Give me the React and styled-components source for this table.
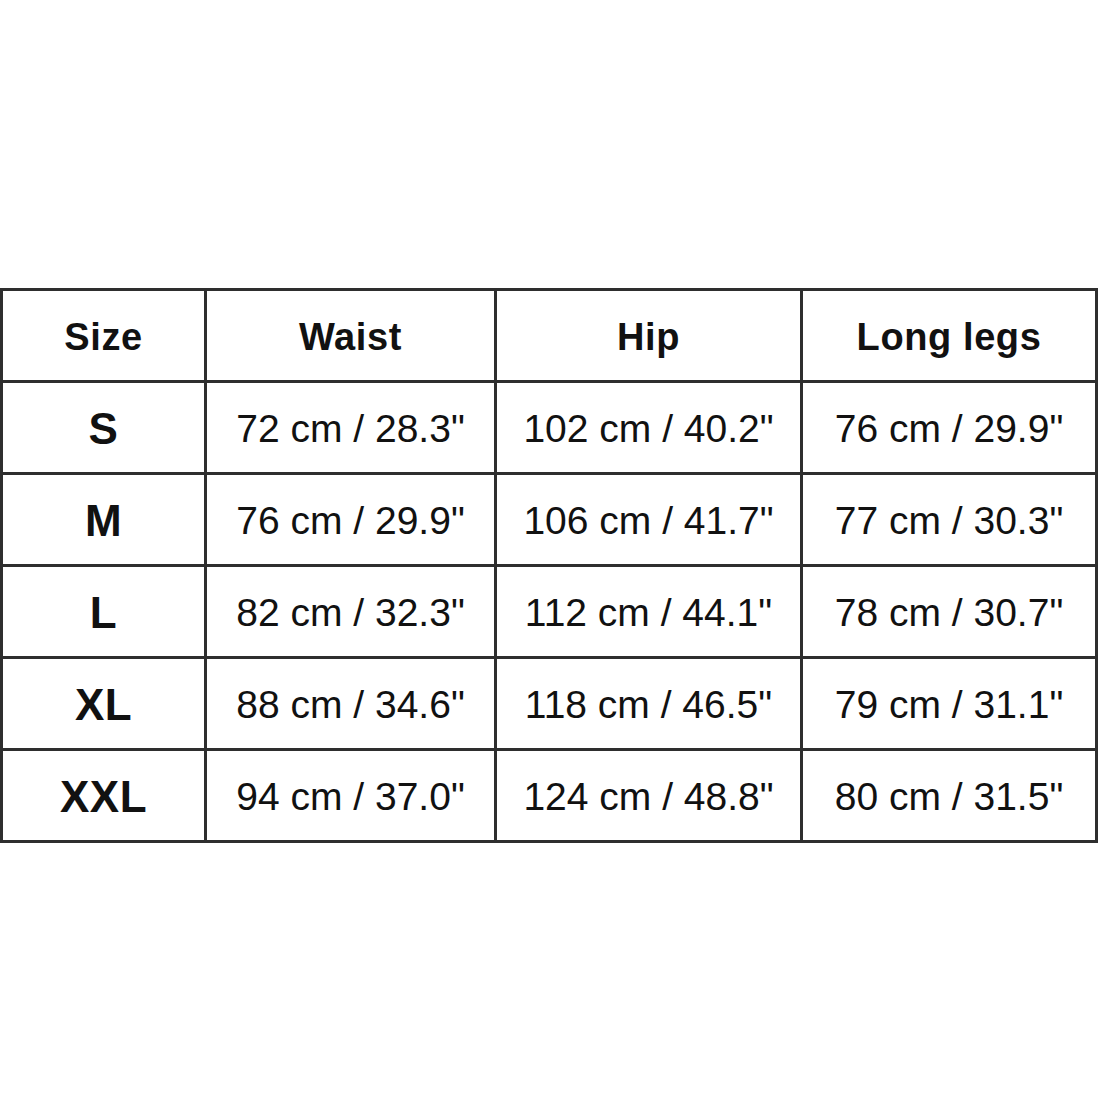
import React from "react";
import styled, { createGlobalStyle } from "styled-components";

const GlobalStyle = createGlobalStyle`
  html, body {
    margin: 0;
    padding: 0;
    background: #ffffff;
  }
  body {
    font-family: "Liberation Sans", Arial, sans-serif;
  }
`;

const Page = styled.div`
  width: 1100px;
  height: 1100px;
  padding-top: 288px;
  box-sizing: border-box;
  background: #ffffff;
`;

const Grid = styled.div`
  display: grid;
  grid-template-columns: 201px 287px 303px 292px;
  grid-auto-rows: 89px;
  gap: 3px;
  padding: 3px;
  width: 1098px;
  box-sizing: border-box;
  background: #2e2e2e;
`;

const sizes = { size: "44px", head: "38px", value: "39px" };

const Cell = styled.div`
  background: #ffffff;
  display: flex;
  align-items: center;
  justify-content: center;
  color: #111111;
  font-family: "Liberation Sans", Arial, sans-serif;
  font-size: ${(p) => sizes[p.$kind]};
  font-weight: ${(p) => (p.$kind === "value" ? 400 : 700)};
  letter-spacing: ${(p) => (p.$kind === "head" ? "0.6px" : p.$kind === "size" ? "0.5px" : "0")};
  padding-top: ${(p) => (p.$kind === "head" ? "3px" : "2px")};
  box-sizing: border-box;
  white-space: nowrap;
`;

const headers = ["Size", "Waist", "Hip", "Long legs"];
const rows = [
  ["S", '72 cm / 28.3"', '102 cm / 40.2"', '76 cm / 29.9"'],
  ["M", '76 cm / 29.9"', '106 cm / 41.7"', '77 cm / 30.3"'],
  ["L", '82 cm / 32.3"', '112 cm / 44.1"', '78 cm / 30.7"'],
  ["XL", '88 cm / 34.6"', '118 cm / 46.5"', '79 cm / 31.1"'],
  ["XXL", '94 cm / 37.0"', '124 cm / 48.8"', '80 cm / 31.5"'],
];

export default function App() {
  return (
    <>
      <GlobalStyle />
      <Page>
        <Grid>
          {headers.map((h) => (
            <Cell key={h} $kind="head">
              {h}
            </Cell>
          ))}
          {rows.map((r) =>
            r.map((v, i) => (
              <Cell key={r[0] + i} $kind={i === 0 ? "size" : "value"}>
                {v}
              </Cell>
            ))
          )}
        </Grid>
      </Page>
    </>
  );
}
